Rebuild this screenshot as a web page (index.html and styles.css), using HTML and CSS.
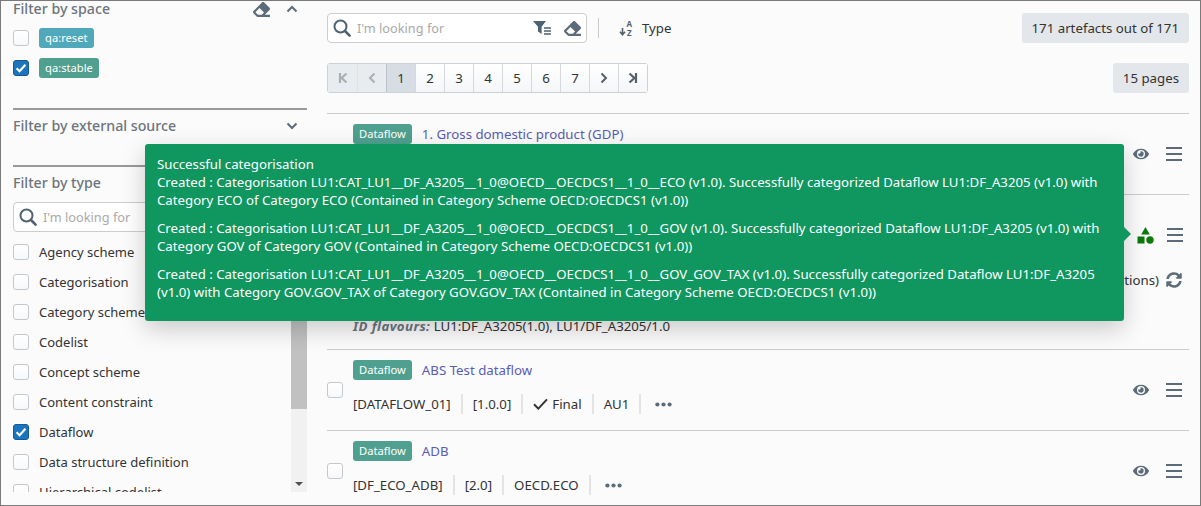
FILE: index.html
```html
<!DOCTYPE html>
<html lang="en">
<head>
  <meta charset="UTF-8">
  <meta name="viewport" content="width=device-width, initial-scale=1.0">
  <title>Artefacts</title>
  <link rel="stylesheet" href="styles.css">
</head>
<body>
  <svg class="sprites" width="0" height="0">
    <symbol id="i-eraser" viewBox="0 0 512 512"><path d="M497.941 273.941c18.745-18.745 18.745-49.137 0-67.882l-160-160c-18.745-18.745-49.137-18.745-67.882 0l-256 256c-18.745 18.745-18.745 49.137 0 67.882l96 96A48.004 48.004 0 0 0 144 480h356c6.627 0 12-5.373 12-12v-40c0-6.627-5.373-12-12-12H355.883l142.058-142.059zm-302.627-62.627l137.373 137.373L265.373 416H150.628l-80-80 124.686-124.686z"/></symbol>
    <symbol id="i-search" viewBox="0 0 18 18"><circle cx="7.5" cy="7.5" r="6" fill="none" stroke="currentColor" stroke-width="2"/><path d="M12 12l4.6 4.6" stroke="currentColor" stroke-width="2.6" stroke-linecap="round"/></symbol>
    <symbol id="i-eye" viewBox="0 0 576 512"><path d="M572.52 241.4C518.29 135.59 410.93 64 288 64S57.68 135.64 3.48 241.41a32.35 32.35 0 0 0 0 29.19C57.71 376.41 165.07 448 288 448s230.32-71.64 284.52-177.41a32.35 32.35 0 0 0 0-29.19zM288 400a144 144 0 1 1 144-144 143.93 143.93 0 0 1-144 144zm0-240a95.31 95.31 0 0 0-25.31 3.79 47.85 47.85 0 0 1-66.9 66.9A95.78 95.78 0 1 0 288 160z"/></symbol>
    <symbol id="i-bars" viewBox="0 0 16 14"><path d="M0 1h16M0 7h16M0 13h16" stroke="currentColor" stroke-width="2" fill="none"/></symbol>
    <symbol id="i-sync" viewBox="0 0 512 512"><path d="M370.72 133.28C339.458 104.008 298.888 87.962 255.848 88c-77.458.068-144.328 53.178-162.791 126.85-1.344 5.363-6.122 9.15-11.651 9.15H24.103c-7.498 0-13.194-6.807-11.807-14.176C33.933 94.924 134.813 8 256 8c66.448 0 126.791 26.136 171.315 68.685L463.03 40.97C478.149 25.851 504 36.559 504 57.941V192c0 13.255-10.745 24-24 24H345.941c-21.382 0-32.09-25.851-16.971-40.971l41.75-41.749zM32 296h134.059c21.382 0 32.09 25.851 16.971 40.971l-41.75 41.75c31.262 29.273 71.835 45.319 114.876 45.28 77.418-.07 144.315-53.144 162.787-126.849 1.344-5.363 6.122-9.15 11.651-9.15h57.304c7.498 0 13.194 6.807 11.807 14.176C478.067 417.076 377.187 504 256 504c-66.448 0-126.791-26.136-171.315-68.685L48.97 471.03C33.851 486.149 8 475.441 8 454.059V320c0-13.255 10.745-24 24-24z"/></symbol>
    <symbol id="i-tick" viewBox="0 0 12 10"><path d="M1.6 5.2l3 3 5.8-6.4" fill="none" stroke="#fff" stroke-width="2.2"/></symbol>
    <symbol id="i-check" viewBox="0 0 15 12"><path d="M1 6.3l4.3 4.3L14 1.4" fill="none" stroke="currentColor" stroke-width="2"/></symbol>
    <symbol id="i-dots" viewBox="0 0 17 5"><circle cx="2.4" cy="2.5" r="2.1"/><circle cx="8.5" cy="2.5" r="2.1"/><circle cx="14.6" cy="2.5" r="2.1"/></symbol>
    <symbol id="i-up" viewBox="0 0 12 8"><path d="M1.5 6.5L6 2l4.5 4.5" fill="none" stroke="currentColor" stroke-width="2"/></symbol>
    <symbol id="i-down" viewBox="0 0 12 8"><path d="M1.5 1.5L6 6l4.5-4.5" fill="none" stroke="currentColor" stroke-width="2"/></symbol>
  </svg>

  <div class="frame">
    <aside class="sidebar">
      <section class="filter filter-space">
        <div class="filter-head">
          <span>Filter by space</span>
          <span class="head-icons">
            <svg class="icon eraser"><use href="#i-eraser"/></svg>
            <svg class="icon chevron"><use href="#i-up"/></svg>
          </span>
        </div>
        <div class="check-row"><span class="box"></span><span class="badge badge-reset">qa:reset</span></div>
        <div class="check-row"><span class="box checked"><svg><use href="#i-tick"/></svg></span><span class="badge badge-green">qa:stable</span></div>
      </section>

      <section class="filter filter-source">
        <div class="filter-head">
          <span>Filter by external source</span>
          <span class="head-icons"><svg class="icon chevron"><use href="#i-down"/></svg></span>
        </div>
      </section>

      <section class="filter filter-type">
        <div class="filter-head"><span>Filter by type</span></div>
        <div class="search side-search">
          <svg class="icon search-icon"><use href="#i-search"/></svg>
          <span class="placeholder">I'm looking for</span>
        </div>
        <div class="type-box">
          <div class="type-list">
            <div class="check-row"><span class="box"></span>Agency scheme</div>
            <div class="check-row"><span class="box"></span>Categorisation</div>
            <div class="check-row"><span class="box"></span>Category scheme</div>
            <div class="check-row"><span class="box"></span>Codelist</div>
            <div class="check-row"><span class="box"></span>Concept scheme</div>
            <div class="check-row"><span class="box"></span>Content constraint</div>
            <div class="check-row"><span class="box checked"><svg><use href="#i-tick"/></svg></span>Dataflow</div>
            <div class="check-row"><span class="box"></span>Data structure definition</div>
            <div class="check-row"><span class="box"></span>Hierarchical codelist</div>
          </div>
          <div class="scrollbar">
            <div class="thumb"></div>
            <div class="scroll-arrow"></div>
          </div>
        </div>
      </section>
    </aside>

    <main class="content">
      <div class="toolbar">
        <div class="search main-search">
          <svg class="icon search-icon"><use href="#i-search"/></svg>
          <span class="placeholder">I'm looking for</span>
          <svg class="icon filter-list" viewBox="0 0 20 16">
            <path d="M0 1h13L8.6 6.8V14L5 11.6V6.8z"/>
            <path d="M11 8h7M11 11h7M11 14h7" stroke="currentColor" stroke-width="1.3"/>
          </svg>
          <svg class="icon eraser"><use href="#i-eraser"/></svg>
        </div>
        <span class="tool-sep"></span>
        <svg class="icon sort-icon" viewBox="0 0 17 18">
          <path d="M3.5 9v6M1 12.8l2.5 3 2.5-3" fill="none" stroke="currentColor" stroke-width="1.6"/>
          <text x="7.6" y="7.5" class="sort-letter">A</text>
          <text x="8" y="17" class="sort-letter">Z</text>
        </svg>
        <span class="sort-label">Type</span>
        <span class="count">171 artefacts out of 171</span>
      </div>

      <div class="toolbar pager-bar">
        <div class="pager">
          <span class="page off"><svg class="icon pg" viewBox="0 0 10 12"><path d="M2 1v10M8.5 1.5L3.6 6l4.9 4.5" fill="none" stroke="currentColor" stroke-width="2.2"/></svg></span>
          <span class="page off"><svg class="icon pg" viewBox="0 0 10 12"><path d="M7.5 1.5L3 6l4.5 4.5" fill="none" stroke="currentColor" stroke-width="2"/></svg></span>
          <span class="page active">1</span>
          <span class="page">2</span>
          <span class="page">3</span>
          <span class="page">4</span>
          <span class="page">5</span>
          <span class="page">6</span>
          <span class="page">7</span>
          <span class="page"><svg class="icon pg" viewBox="0 0 10 12"><path d="M2.5 1.5L7 6l-4.5 4.5" fill="none" stroke="currentColor" stroke-width="2"/></svg></span>
          <span class="page"><svg class="icon pg" viewBox="0 0 10 12"><path d="M8 1v10M1.5 1.5L6.4 6l-4.9 4.5" fill="none" stroke="currentColor" stroke-width="2.2"/></svg></span>
        </div>
        <span class="count">15 pages</span>
      </div>

      <div class="results">
        <article class="row">
          <span class="box"></span>
          <div class="row-body">
            <div class="row-title"><span class="badge badge-green">Dataflow</span><a class="link">1. Gross domestic product (GDP)</a></div>
          </div>
          <div class="actions">
            <svg class="icon eye"><use href="#i-eye"/></svg>
            <svg class="icon bars"><use href="#i-bars"/></svg>
          </div>
        </article>

        <article class="row row-tall">
          <div class="row-body">
            <div class="row-refresh">
              <span>tions)</span>
              <svg class="icon sync"><use href="#i-sync"/></svg>
            </div>
            <div class="flavours"><b>ID flavours:</b> LU1:DF_A3205(1.0), LU1/DF_A3205/1.0</div>
          </div>
          <div class="actions">
            <svg class="icon shapes" viewBox="0 0 17 17">
              <path d="M8.5 0l4.3 7.5H4.2z"/>
              <rect x="0.5" y="9.5" width="7" height="7"/>
              <circle cx="13" cy="13" r="3.7"/>
            </svg>
            <svg class="icon bars"><use href="#i-bars"/></svg>
          </div>
        </article>

        <article class="row">
          <span class="box"></span>
          <div class="row-body">
            <div class="row-title"><span class="badge badge-green">Dataflow</span><a class="link">ABS Test dataflow</a></div>
            <div class="meta">
              <span>[DATAFLOW_01]</span>
              <span>[1.0.0]</span>
              <span class="final"><svg class="icon check"><use href="#i-check"/></svg>Final</span>
              <span>AU1</span>
              <svg class="icon dots"><use href="#i-dots"/></svg>
            </div>
          </div>
          <div class="actions">
            <svg class="icon eye"><use href="#i-eye"/></svg>
            <svg class="icon bars"><use href="#i-bars"/></svg>
          </div>
        </article>

        <article class="row">
          <span class="box"></span>
          <div class="row-body">
            <div class="row-title"><span class="badge badge-green">Dataflow</span><a class="link">ADB</a></div>
            <div class="meta">
              <span>[DF_ECO_ADB]</span>
              <span>[2.0]</span>
              <span>OECD.ECO</span>
              <svg class="icon dots"><use href="#i-dots"/></svg>
            </div>
          </div>
          <div class="actions">
            <svg class="icon eye"><use href="#i-eye"/></svg>
            <svg class="icon bars"><use href="#i-bars"/></svg>
          </div>
        </article>
      </div>
    </main>

    <div class="tooltip">
      <p>Successful categorisation<br>Created : Categorisation LU1:CAT_LU1__DF_A3205__1_0@OECD__OECDCS1__1_0__ECO (v1.0). Successfully categorized Dataflow LU1:DF_A3205 (v1.0) with<br>Category ECO of Category ECO (Contained in Category Scheme OECD:OECDCS1 (v1.0))</p>
      <p>Created : Categorisation LU1:CAT_LU1__DF_A3205__1_0@OECD__OECDCS1__1_0__GOV (v1.0). Successfully categorized Dataflow LU1:DF_A3205 (v1.0) with<br>Category GOV of Category GOV (Contained in Category Scheme OECD:OECDCS1 (v1.0))</p>
      <p>Created : Categorisation LU1:CAT_LU1__DF_A3205__1_0@OECD__OECDCS1__1_0__GOV_GOV_TAX (v1.0). Successfully categorized Dataflow LU1:DF_A3205<br>(v1.0) with Category GOV.GOV_TAX of Category GOV.GOV_TAX (Contained in Category Scheme OECD:OECDCS1 (v1.0))</p>
    </div>
  </div>
</body>
</html>
```

FILE: styles.css
```css
* {
  box-sizing: border-box;
}

html, body {
  margin: 0;
  padding: 0;
}

body {
  font-family: "Noto Sans", Arial, sans-serif;
  font-size: 13.25px;
  line-height: 20px;
  color: #333;
  background-color: #fff;
}

.sprites {
  position: absolute;
}

.frame {
  position: relative;
  display: flex;
  width: 1201px;
  height: 506px;
  overflow: hidden;
  background-color: #fbfbfb;
  border: 1px solid #7a7a7a;
}

.icon {
  display: block;
  flex: none;
  fill: currentColor;
}

/* sidebar */
.sidebar {
  flex: none;
  width: 306px;
  margin-top: -2px;
  padding-left: 12px;
}

.filter + .filter {
  border-top: 2px solid #999;
}

.filter-space {
  height: 109px;
}

.filter-source {
  height: 57px;
  padding-top: 6px;
}

.filter-type {
  padding-top: 6px;
}

.filter-head {
  display: flex;
  justify-content: space-between;
  align-items: center;
  height: 20px;
  padding-right: 9px;
  font-size: 14.2px;
  font-weight: 500;
  color: #6c757d;
}

.filter-space .filter-head {
  margin-bottom: 4px;
}

.head-icons {
  display: flex;
  align-items: center;
  gap: 16px;
}

.eraser {
  width: 17px;
  height: 17px;
  color: #5c6b7a;
}

.chevron {
  width: 12px;
  height: 8px;
  color: #5c6b7a;
}

.check-row {
  display: flex;
  align-items: center;
  height: 30px;
  gap: 10px;
  font-size: 13px;
}

.box {
  display: block;
  flex: none;
  width: 16px;
  height: 16px;
  background: linear-gradient(#fff, #f7f8fa);
  border: 1px solid #c3c8cd;
  border-radius: 3px;
}

.box.checked {
  padding: 2px 1px;
  background: #1b75bc;
  border-color: #155a94;
}

.box svg {
  display: block;
  width: 12px;
  height: 10px;
}

.badge {
  display: inline-block;
  height: 20px;
  padding: 0 6px;
  font-size: 11.2px;
  line-height: 20px;
  color: #fff;
  border-radius: 3px;
}

.badge-reset {
  background-color: #4fa9bb;
}

.badge-green {
  background-color: #4fa08f;
}

.search {
  display: flex;
  align-items: center;
  height: 30px;
  padding-left: 5px;
  background-color: #fff;
  border: 1px solid #ccc;
  border-radius: 4px;
}

.side-search {
  width: 280px;
  margin-top: 9px;
  margin-bottom: 5px;
}

.search-icon {
  width: 18px;
  height: 18px;
  margin-right: 6px;
  color: #4f6272;
}

.placeholder {
  flex: 1;
  font-size: 12.75px;
  color: #aaa;
}

.type-box {
  display: flex;
  height: 255px;
}

.type-list {
  flex: 1;
  overflow: hidden;
}

.scrollbar {
  position: relative;
  flex: none;
  width: 16px;
  background-color: #f1f1f1;
}

.thumb {
  height: 172px;
  background-color: #c1c1c1;
}

.scroll-arrow {
  position: absolute;
  left: 4px;
  bottom: 6px;
  border-left: 4px solid transparent;
  border-right: 4px solid transparent;
  border-top: 4px solid #505050;
}

/* main area */
.content {
  flex: 1;
  min-width: 0;
  padding: 12px 11px 0 20px;
}

.toolbar {
  display: flex;
  align-items: center;
  height: 30px;
}

.main-search {
  width: 260px;
  padding-right: 5px;
}

.main-search .eraser {
  margin-left: 11px;
}

.filter-list {
  width: 20px;
  height: 16px;
  color: #4f6272;
}

.tool-sep {
  width: 1px;
  height: 20px;
  margin: 0 20px 0 11px;
  background-color: #ccc;
}

.sort-icon {
  width: 17px;
  height: 18px;
  margin-right: 6px;
  color: #4f6272;
}

.sort-letter {
  font-size: 8px;
  font-weight: 700;
}

.sort-label {
  color: #333;
}

.count {
  margin-left: auto;
  height: 30px;
  padding: 0 10px;
  line-height: 30px;
  color: #333;
  background-color: #e3e6ea;
  border-radius: 3px;
}

.pager-bar {
  margin-top: 20px;
}

.pager {
  display: flex;
  height: 30px;
  border: 1px solid #ccd1d6;
  border-radius: 3px;
}

.page {
  display: flex;
  align-items: center;
  justify-content: center;
  width: 29px;
  color: #333;
  background: linear-gradient(#fff, #f4f6f8);
  border-left: 1px solid #d5d9dd;
}

.page:first-child {
  border-left: 0;
}

.page.off {
  color: #a9afb5;
  background: #e9ecef;
  border-left-color: #e0e3e6;
}

.page.active {
  background: #d6dde5;
  border-left-color: #b9c1ca;
}

.pg {
  width: 10px;
  height: 12px;
  color: #56606b;
}

.off .pg {
  color: #a9afb5;
}

.results {
  margin-top: 20px;
}

.row {
  display: flex;
  align-items: center;
  height: 81px;
  border-top: 1px solid #ccc;
}

.row > .box {
  margin: 0 10px 0 0;
}

.row-tall {
  align-items: flex-start;
  height: 155px;
  padding-left: 26px;
}

.row-body {
  flex: 1;
  min-width: 0;
  padding-top: 10px;
  align-self: flex-start;
}

.row-title {
  display: flex;
  align-items: center;
  gap: 10px;
  height: 20px;
}

.link {
  color: #5a5cb5;
}

.meta {
  display: flex;
  align-items: center;
  height: 20px;
  margin-top: 14px;
}

.meta > span {
  padding-right: 10px;
  margin-right: 10px;
  border-right: 2px solid #e4e4e4;
}

.final {
  display: flex;
  align-items: center;
}

.check {
  width: 15px;
  height: 12px;
  margin-right: 4px;
}

.dots {
  width: 17px;
  height: 5px;
  margin-left: 4px;
  color: #5c6b7a;
}

.row-refresh {
  display: flex;
  justify-content: flex-end;
  align-items: center;
  gap: 7px;
  height: 20px;
  margin: 65px -56px 0 0;
  padding-right: 7px;
}

.flavours {
  margin-top: 26px;
}

.flavours b {
  font-style: italic;
  letter-spacing: 0.4px;
  color: #6c757d;
}

.actions {
  display: flex;
  align-items: center;
  flex: none;
  gap: 17px;
  width: 56px;
  height: 80px;
  color: #5c6b7a;
}

.row-tall .actions {
  padding-left: 4px;
  gap: 13px;
}

.eye {
  width: 16px;
  height: 16px;
}

.bars {
  width: 16px;
  height: 14px;
}

.shapes {
  width: 17px;
  height: 17px;
  color: #0a7a0a;
}

.sync {
  width: 16px;
  height: 16px;
  color: #5c6b7a;
}

/* tooltip over the list */
.tooltip {
  position: absolute;
  left: 144px;
  top: 143px;
  width: 979px;
  height: 177px;
  padding: 11px 12px;
  font-size: 13.22px;
  line-height: 18px;
  color: #fff;
  background-color: #10965f;
  border-radius: 3px;
  box-shadow: 0 8px 24px rgba(0, 0, 0, 0.2);
}

.tooltip p {
  margin: 0 0 10px;
  white-space: nowrap;
}

.tooltip::after {
  content: "";
  position: absolute;
  right: -7px;
  top: 83px;
  border-top: 7px solid transparent;
  border-bottom: 7px solid transparent;
  border-left: 7px solid #10965f;
}
```
